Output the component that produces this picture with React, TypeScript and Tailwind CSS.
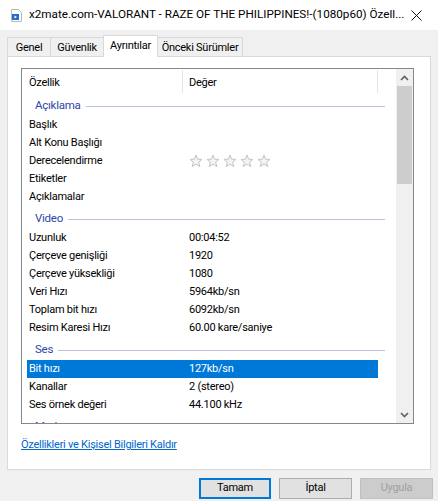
import React from "react";

type Row = { label: string; value?: string; stars?: boolean; selected?: boolean };
type Group = { title: string; rows: Row[] };

const groups: Group[] = [
  {
    title: "Açıklama",
    rows: [
      { label: "Başlık" },
      { label: "Alt Konu Başlığı" },
      { label: "Derecelendirme", stars: true },
      { label: "Etiketler" },
      { label: "Açıklamalar" },
    ],
  },
  {
    title: "Video",
    rows: [
      { label: "Uzunluk", value: "00:04:52" },
      { label: "Çerçeve genişliği", value: "1920" },
      { label: "Çerçeve yüksekliği", value: "1080" },
      { label: "Veri Hızı", value: "5964kb/sn" },
      { label: "Toplam bit hızı", value: "6092kb/sn" },
      { label: "Resim Karesi Hızı", value: "60.00 kare/saniye" },
    ],
  },
  {
    title: "Ses",
    rows: [
      { label: "Bit hızı", value: "127kb/sn", selected: true },
      { label: "Kanallar", value: "2 (stereo)" },
      { label: "Ses örnek değeri", value: "44.100 kHz" },
    ],
  },
  { title: "Medya", rows: [] },
];

function Star() {
  return (
    <svg width="14" height="14" viewBox="0 0 14 14" className="shrink-0">
      <path
        d="M7 1 L8.6 5.2 L13 5.4 L9.6 8.2 L10.8 12.6 L7 10.1 L3.2 12.6 L4.4 8.2 L1 5.4 L5.4 5.2 Z"
        fill="#f4f4f4"
        stroke="#c4c4c4"
        strokeWidth="1"
        strokeLinejoin="round"
      />
    </svg>
  );
}

function FileIcon() {
  return (
    <svg width="11" height="13" viewBox="0 0 11 13">
      <path d="M0.5 0.5 H7.5 L10.5 3.5 V12.5 H0.5 Z" fill="#ffffff" stroke="#b8b8b8" />
      <rect x="1" y="5" width="7" height="6" fill="#1f6fc5" />
      <path d="M3.5 6.5 L6 8 L3.5 9.5 Z" fill="#ffffff" />
    </svg>
  );
}

export default function App() {
  return (
    <div className="w-[438px] h-[501px] bg-[#f0f0f0] text-[11px] tracking-[-0.25px] text-black overflow-hidden font-[Roboto,Arial,sans-serif]">
      {/* title bar */}
      <div className="h-[30px] bg-white flex items-center">
        <div className="ml-[10px] w-[12px] flex justify-center">
          <FileIcon />
        </div>
        <div className="ml-[7px] whitespace-nowrap text-[11.7px] tracking-normal">
          x2mate.com-VALORANT - RAZE OF THE PHILIPPINES!-(1080p60) Özell...
        </div>
        <div className="ml-auto mr-[16px] flex">
          <svg width="11" height="11" viewBox="0 0 11 11">
            <path d="M0.5 0.5 L10.5 10.5 M10.5 0.5 L0.5 10.5" stroke="#111" strokeWidth="1" />
          </svg>
        </div>
      </div>

      {/* tabs */}
      <div className="mt-[5px] ml-[7px] flex items-end h-[21px] relative z-10">
        <div className="w-[44px] h-[19px] bg-[#f0f0f0] border border-b-0 border-[#d9d9d9] flex justify-center pt-[2px]">
          Genel
        </div>
        <div className="w-[54px] h-[19px] -ml-px bg-[#f0f0f0] border border-b-0 border-[#d9d9d9] flex justify-center pt-[2px]">
          Güvenlik
        </div>
        <div className="w-[55px] h-[22px] -ml-px -mb-px relative bg-white border border-b-0 border-[#d9d9d9] flex justify-center pt-[2px]">
          Ayrıntılar
        </div>
        <div className="w-[86px] h-[19px] -ml-px bg-[#f0f0f0] border border-b-0 border-[#d9d9d9] flex justify-center pt-[2px]">
          Önceki Sürümler
        </div>
      </div>

      {/* panel */}
      <div className="ml-[7px] w-[424px] h-[414px] bg-white border border-[#d9d9d9] flex flex-col">
        {/* list box */}
        <div className="mt-[11px] ml-[13px] w-[393px] h-[356px] border border-[#828790] flex">
          <div className="flex-1 overflow-hidden">
            {/* header */}
            <div className="h-[24px] flex items-start">
              <div className="w-[160px] pl-[7px] pt-[6px]">Özellik</div>
              <div className="w-px h-[23px] bg-[#e5e5e5] mt-px" />
              <div className="w-[194px] pl-[6px] pt-[6px]">Değer</div>
              <div className="w-px h-[23px] bg-[#e5e5e5] mt-px" />
            </div>
            {groups.map((g) => (
              <div key={g.title}>
                <div className="h-[23px] ml-[13px] w-[350px] flex items-center pt-[3px]">
                  <span className="text-[#2e46a8] text-[11.5px]">{g.title}</span>
                  <div className="flex-1 ml-[5px] h-px bg-[#b9c3db]" />
                </div>
                {g.rows.map((r) => (
                  <div
                    key={r.label}
                    className={
                      r.selected
                        ? "h-[18px] ml-[5px] w-[351px] flex items-center bg-[#0078d7] text-white"
                        : "h-[18px] ml-[5px] w-[351px] flex items-center"
                    }
                  >
                    <div className="w-[162px] pl-[2px] whitespace-nowrap">{r.label}</div>
                    {r.stars ? (
                      <div className="flex gap-[3px]">
                        <Star />
                        <Star />
                        <Star />
                        <Star />
                        <Star />
                      </div>
                    ) : (
                      <div className="whitespace-nowrap">{r.value}</div>
                    )}
                  </div>
                ))}
              </div>
            ))}
          </div>
          {/* scrollbar */}
          <div className="w-[17px] bg-[#f0f0f0] flex flex-col">
            <div className="h-[17px] flex items-center justify-center">
              <svg width="9" height="6" viewBox="0 0 9 6">
                <path d="M1 5 L4.5 1.5 L8 5" fill="none" stroke="#606060" strokeWidth="1.6" />
              </svg>
            </div>
            <div className="h-[98px] mx-px bg-[#cdcdcd]" />
            <div className="flex-1" />
            <div className="h-[17px] flex items-center justify-center">
              <svg width="9" height="6" viewBox="0 0 9 6">
                <path d="M1 1 L4.5 4.5 L8 1" fill="none" stroke="#606060" strokeWidth="1.6" />
              </svg>
            </div>
          </div>
        </div>
        <div className="mt-[13px] ml-[13px] h-[16px] leading-[16px]">
          <span className="text-[#0066cc] underline">Özellikleri ve Kişisel Bilgileri Kaldır</span>
        </div>
      </div>

      {/* buttons */}
      <div className="mt-[8px] flex justify-end gap-[8px] pr-[5px]">
        <button className="w-[72px] h-[21px] bg-[#e1e1e1] border-2 border-[#0078d7] flex items-center justify-center">
          Tamam
        </button>
        <button className="w-[73px] h-[21px] bg-[#e1e1e1] border border-[#adadad] flex items-center justify-center">
          İptal
        </button>
        <button className="w-[73px] h-[21px] bg-[#cccccc] border border-[#bfbfbf] text-[#a0a0a0] flex items-center justify-center">
          Uygula
        </button>
      </div>
    </div>
  );
}
